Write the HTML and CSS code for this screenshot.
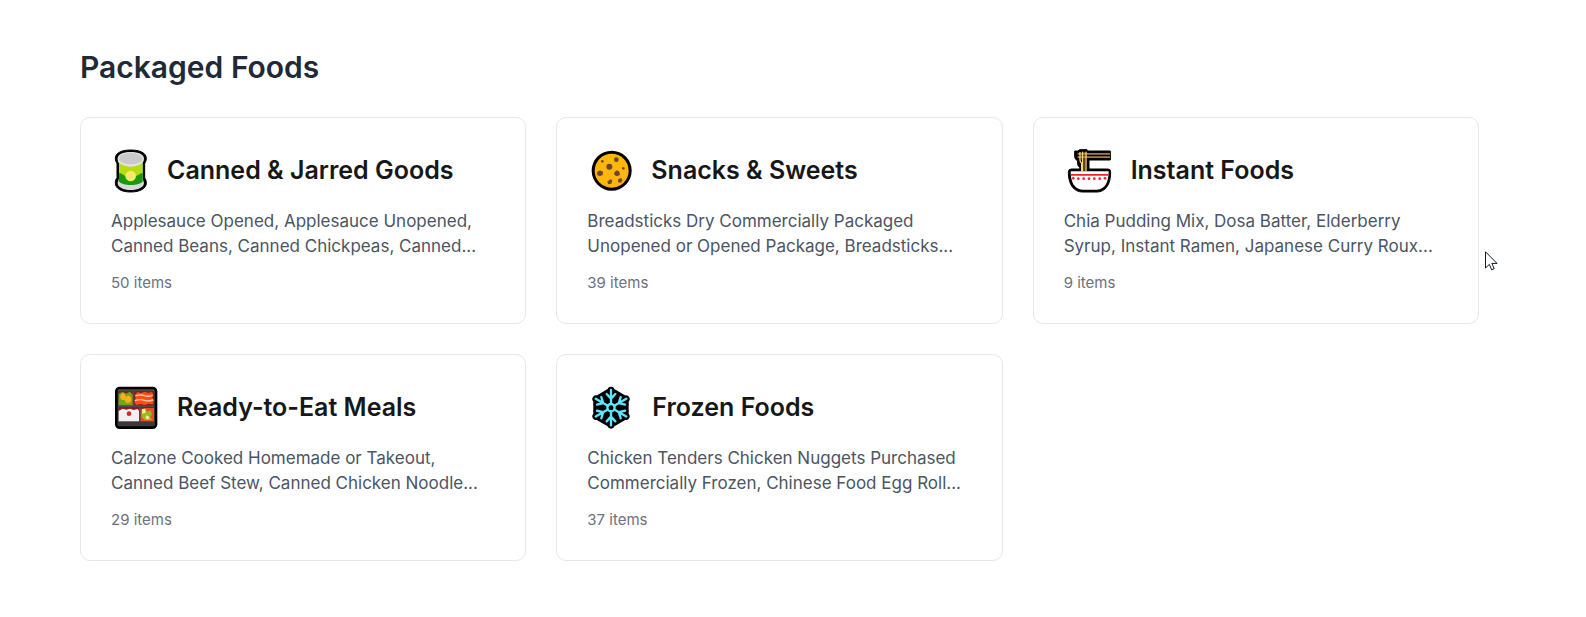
FILE: index.html
```html
<!DOCTYPE html>
<html lang="en">
<head>
    <meta charset="UTF-8">
    <meta name="viewport" content="width=device-width, initial-scale=1.0">
    <title>Packaged Foods</title>
    <link rel="stylesheet" href="styles.css">
</head>
<body>
    <main class="page">
        <h2 class="section-title">Packaged Foods</h2>

        <div class="category-grid">
            <a class="card" href="#canned">
                <div class="card-header">
                    <svg class="icon" width="41" height="45" viewBox="19 24 123 135" aria-hidden="true">
                        <path stroke="#000" stroke-width="3" d="M78 30C50 30 32 39 32 55C32 63 35 66 37 71V113C34 117 32 121 32 129C32 146 51 156 78 156S125 146 125 129C125 121 122 117 120 113V71C122 66 125 63 125 55C125 39 106 30 78 30Z"/>
                        <path fill="#d9d9d9" d="M78 36C53 36 39 43 39 56L43 68V115L39 129C39 142 56 150 78 150S118 142 118 129L114 115V68L118 56C118 43 103 36 78 36Z"/>
                        <path fill="#159b0b" d="M43 68H114V124C106 139 51 139 43 124Z"/>
                        <path fill="#b8dc12" d="M43 67H114V99C104 100 99 108 91 109H66C59 109 54 100 43 99Z"/>
                        <ellipse cx="78" cy="59" rx="39" ry="21" fill="#e3e3e3"/>
                        <ellipse cx="78" cy="56" rx="35" ry="17" fill="#c9c9c9"/>
                        <circle cx="78" cy="108" r="16" fill="#fbe76a"/>
                    </svg>
                    <h3>Canned &amp; Jarred Goods</h3>
                </div>
                <p class="description">Applesauce Opened, Applesauce Unopened, Canned Beans, Canned Chickpeas, Canned...</p>
                <p class="count">50 items</p>
            </a>

            <a class="card" href="#snacks">
                <div class="card-header">
                    <svg class="icon" width="49" height="45" viewBox="21 24 147 135" aria-hidden="true">
                        <circle cx="95" cy="92" r="60"/>
                        <circle cx="95" cy="92" r="51" fill="#ffb60a"/>
                        <g fill="#6d4534">
                            <circle cx="88" cy="80" r="9"/>
                            <circle cx="109" cy="59" r="7"/>
                            <circle cx="67" cy="64" r="4"/>
                            <circle cx="130" cy="85" r="4"/>
                            <path d="M52 95L60 91L69 95L68 105L59 109L51 104Z"/>
                            <path d="M103 97L111 91L118 95L120 105L110 109L103 104Z"/>
                            <path d="M115 117L124 114L127 121L123 128L114 127Z"/>
                            <path d="M82 125L91 118L97 121L94 131L85 133Z"/>
                        </g>
                    </svg>
                    <h3>Snacks &amp; Sweets</h3>
                </div>
                <p class="description">Breadsticks Dry Commercially Packaged Unopened or Opened Package, Breadsticks...</p>
                <p class="count">39 items</p>
            </a>

            <a class="card" href="#instant">
                <div class="card-header">
                    <svg class="icon" width="52" height="45" viewBox="13 24 156 135" aria-hidden="true">
                        <path stroke="#000" stroke-width="3" d="M45 33H55L60 29H82L86 33H152V60H88V87H145Q153 87 153 97C153 134 137 156 112 156H68C43 156 26 134 26 97Q26 87 35 87H60V82Q52 78 54 63Q45 58 45 50Z"/>
                        <path fill="#fff" d="M33 94H147C147 129 134 149 112 149H68C46 149 33 129 33 94Z"/>
                        <path fill="#a87a4c" d="M54 39H151V44H54ZM54 49H151V54H54Z"/>
                        <path fill="none" stroke="#ffd27a" stroke-width="4" d="M61 36V59Q61 66 66 70V95M69 35V95M79 35V95"/>
                        <path fill="none" stroke="#a97839" stroke-width="2" d="M65 37V60M74 36V94"/>
                        <path fill="#e5252b" d="M33 102H147L146 107H34Z"/>
                        <g fill="#ee2430">
                            <circle cx="41" cy="115" r="4"/>
                            <circle cx="56" cy="116" r="4"/>
                            <circle cx="72" cy="116" r="4"/>
                            <circle cx="88" cy="116" r="4"/>
                            <circle cx="104" cy="116" r="4"/>
                            <circle cx="120" cy="116" r="4"/>
                            <circle cx="136" cy="115" r="4"/>
                        </g>
                    </svg>
                    <h3>Instant Foods</h3>
                </div>
                <p class="description">Chia Pudding Mix, Dosa Batter, Elderberry Syrup, Instant Ramen, Japanese Curry Roux...</p>
                <p class="count">9 items</p>
            </a>

            <a class="card" href="#ready">
                <div class="card-header">
                    <svg class="icon" width="51" height="45" viewBox="18 21 153 135" aria-hidden="true">
                        <rect x="30" y="26" width="127" height="127" rx="14"/>
                        <rect x="38" y="34" width="111" height="111" rx="5" fill="#4b4b4b"/>
                        <rect x="38" y="131" width="111" height="13" rx="4" fill="#393939"/>
                        <path fill="#8d1820" d="M41 39H83V82H41ZM88 39H147V82H88ZM41 87H102V130H41ZM107 87H147V130H107Z"/>
                        <path fill="#70a51c" d="M41 48L53 41L63 47L74 41L83 49V82H41Z"/>
                        <path fill="#ffad18" d="M51 46Q61 45 62 56Q75 48 79 61Q81 74 69 75Q60 76 59 66Q46 68 46 57Q45 49 51 46Z"/>
                        <path fill="#ff4b16" d="M90 51L98 42L107 46L119 41L130 45L141 42L145 50L142 61L147 67L143 79L130 77L119 81L106 78L94 81L88 73L92 63Z"/>
                        <path fill="none" stroke="#ffd0ad" stroke-width="4" stroke-linecap="round" d="M93 53Q108 49 119 53T141 52M91 67Q107 63 118 67T143 66"/>
                        <path fill="#f0f0f0" d="M42 98L53 92L64 95L75 92L86 96L98 93L102 99V130H41V98Z"/>
                        <circle cx="72" cy="107" r="7" fill="#d92821"/>
                        <path fill="#f4491f" d="M107 94L118 90H147V130H107Z"/>
                        <path fill="#8fbe20" d="M111 100L121 94L127 101L136 97L141 109L135 116L142 126H118L109 116Z"/>
                        <path fill="#f7f1a2" d="M111 94L121 92L122 104L112 107ZM125 112L134 117L129 125L121 119Z"/>
                    </svg>
                    <h3>Ready-to-Eat Meals</h3>
                </div>
                <p class="description">Calzone Cooked Homemade or Takeout, Canned Beef Stew, Canned Chicken Noodle...</p>
                <p class="count">29 items</p>
            </a>

            <a class="card" href="#frozen">
                <div class="card-header">
                    <svg class="icon" width="50" height="45" viewBox="21 21 150 135" aria-hidden="true">
                        <defs>
                            <path id="arm" d="M93 78V36M93 62L80 48M93 62L106 48"/>
                            <g id="flake">
                                <use href="#arm"/>
                                <use href="#arm" transform="rotate(60 93 89)"/>
                                <use href="#arm" transform="rotate(120 93 89)"/>
                                <use href="#arm" transform="rotate(180 93 89)"/>
                                <use href="#arm" transform="rotate(240 93 89)"/>
                                <use href="#arm" transform="rotate(300 93 89)"/>
                            </g>
                        </defs>
                        <path stroke="#000" stroke-width="10" stroke-linejoin="round" d="M93 33L141 61V117L93 145L45 117V61Z"/>
                        <use class="flake-back" href="#flake"/>
                        <use class="flake-front" href="#flake"/>
                        <circle cx="93" cy="89" r="11" fill="none" stroke="#5fe4fb" stroke-width="7"/>
                    </svg>
                    <h3>Frozen Foods</h3>
                </div>
                <p class="description">Chicken Tenders Chicken Nuggets Purchased Commercially Frozen, Chinese Food Egg Roll...</p>
                <p class="count">37 items</p>
            </a>
        </div>

        <svg class="pointer" width="13" height="20" viewBox="0 0 13 20" aria-hidden="true">
            <path d="M.5 .8V17L4.3 13.4L6.7 18.8L9.2 17.7L6.9 12.4H12Z" fill="#fff" stroke="#111827"/>
        </svg>
    </main>
</body>
</html>
```

FILE: styles.css
```css
* {
    box-sizing: border-box;
}
body {
    margin: 0;
    background: #fff;
    font-family: Inter, sans-serif;
}
h2, h3, p {
    margin: 0;
}
.page {
    position: relative;
    padding: 47px 107px 56px 80px;
}
.section-title {
    margin-bottom: 30px;
    color: #1f2937;
    font-size: 30px;
    font-weight: 600;
    line-height: 40px;
}
.category-grid {
    display: grid;
    grid-template-columns: repeat(3, 1fr);
    gap: 30px;
}
.card {
    padding: 30px;
    border: 1px solid #e5e7eb;
    border-radius: 10px;
    color: #171717;
    text-decoration: none;
}
.card:hover {
    border-color: #9ca3af;
}
.card-header {
    display: flex;
    align-items: center;
    gap: 15px;
    margin-bottom: 16px;
}
.card-header h3 {
    font-size: 25px;
    font-weight: 600;
    line-height: 35px;
}
.icon {
    flex-shrink: 0;
}
.description {
    margin-bottom: 14px;
    color: #4b5563;
    font-size: 17px;
    line-height: 25px;
}
.count {
    color: #6b7280;
    font-size: 15px;
    line-height: 20px;
}
.flake-back {
    fill: none;
    stroke: #000;
    stroke-width: 20px;
    stroke-linecap: round;
    stroke-linejoin: round;
}
.flake-front {
    fill: none;
    stroke: #5fe4fb;
    stroke-width: 7px;
    stroke-linecap: round;
}
.pointer {
    position: absolute;
    top: 251px;
    right: 88px;
}
```
